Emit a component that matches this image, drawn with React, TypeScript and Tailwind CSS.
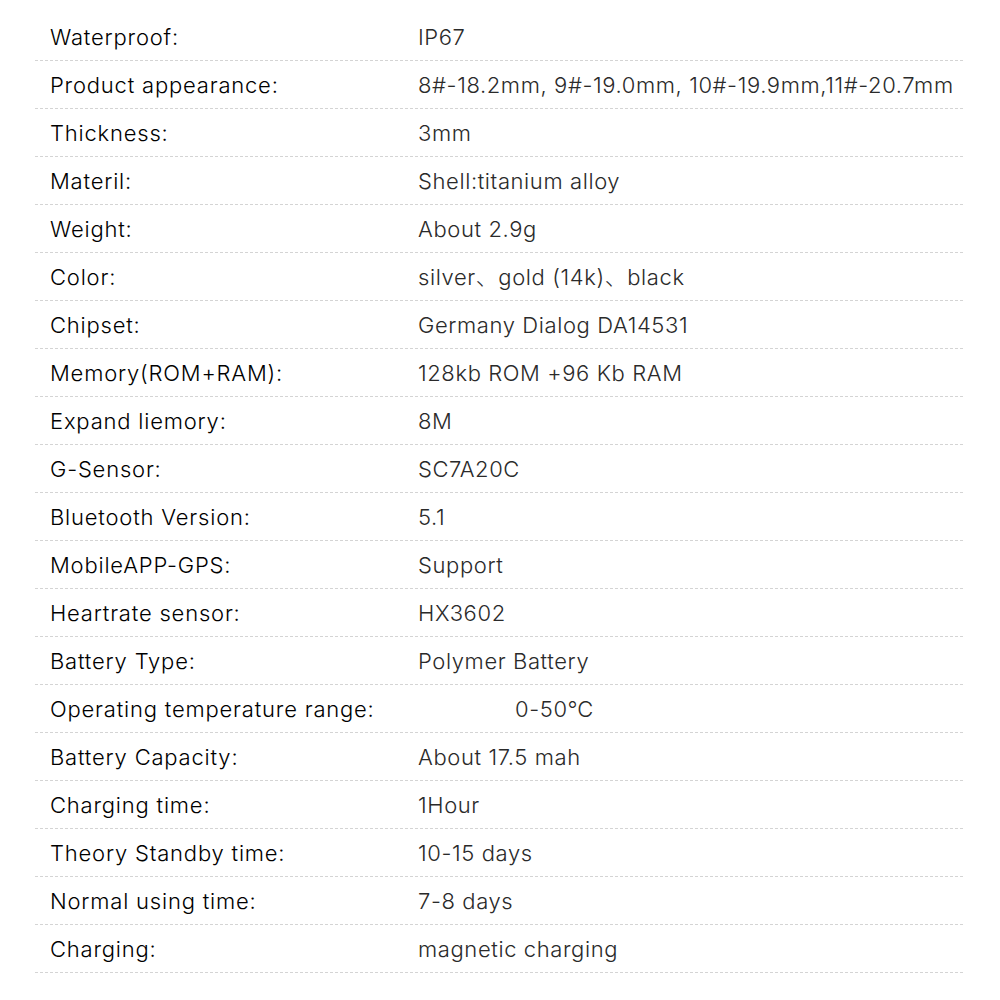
const specs: [string, string, boolean?][] = [
  ["Waterproof:", "IP67"],
  ["Product appearance:", "8#-18.2mm, 9#-19.0mm, 10#-19.9mm,11#-20.7mm"],
  ["Thickness:", "3mm"],
  ["Materil:", "Shell:titanium alloy"],
  ["Weight:", "About 2.9g"],
  ["Color:", "silver、gold (14k)、black"],
  ["Chipset:", "Germany Dialog DA14531"],
  ["Memory(ROM+RAM):", "128kb ROM +96 Kb RAM"],
  ["Expand liemory:", "8M"],
  ["G-Sensor:", "SC7A20C"],
  ["Bluetooth Version:", "5.1"],
  ["MobileAPP-GPS:", "Support"],
  ["Heartrate sensor:", "HX3602"],
  ["Battery Type:", "Polymer Battery"],
  ["Operating temperature range:", "0-50℃", true],
  ["Battery Capacity:", "About 17.5 mah"],
  ["Charging time:", "1Hour"],
  ["Theory Standby time:", "10-15 days"],
  ["Normal using time:", "7-8 days"],
  ["Charging:", "magnetic charging"],
];

export default function App() {
  return (
    <div
      className="w-[1000px] h-[1000px] bg-white pt-[13px] pl-[35px]"
      style={{ fontFamily: "Inter, 'Noto Sans CJK SC', sans-serif" }}
    >
      <div className="w-[928px]">
        {specs.map(([label, value, indent]) => (
          <div
            key={label}
            className="flex h-[48px] items-center border-b border-dashed border-[#d4d4d4] text-[22px] font-light pt-[2px]"
          >
            <div className="w-[383px] shrink-0 pl-[15px] text-[#000] font-[350] tracking-[0.8px]">{label}</div>
            <div
              className={
                indent
                  ? "pl-[97px] text-[#2a2a2a] tracking-[0.6px] whitespace-nowrap"
                  : "text-[#2a2a2a] tracking-[0.6px] whitespace-nowrap"
              }
            >
              {value}
            </div>
          </div>
        ))}
      </div>
    </div>
  );
}
